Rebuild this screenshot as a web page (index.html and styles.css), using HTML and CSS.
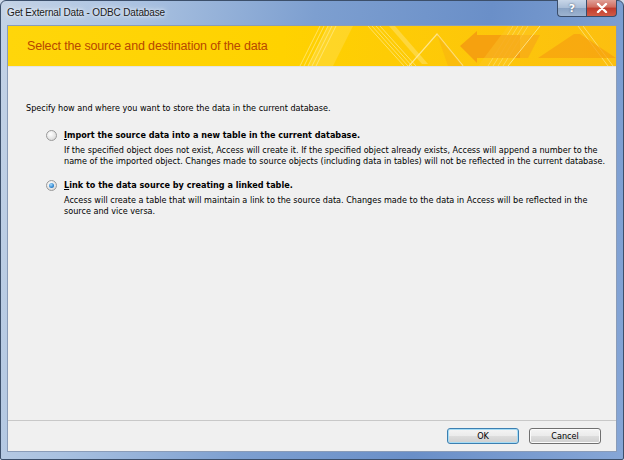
FILE: index.html
```html
<!DOCTYPE html>
<html>
<head>
<meta charset="utf-8">
<link rel="stylesheet" href="styles.css">
</head>
<body>
<div class="window">
  <div class="titlebar">
    <span class="title">Get External Data - ODBC Database</span>
    <div class="captions">
      <span class="cap help">?</span>
      <span class="cap close">
        <svg width="12" height="10" viewBox="0 0 12 10"><path d="M2 1 L10 9 M10 1 L2 9" stroke="#fff" stroke-width="2.4" stroke-linecap="round"/></svg>
      </span>
    </div>
  </div>
  <div class="client">
    <div class="banner">
      <svg class="banner-art" width="608" height="40" viewBox="0 0 608 40">
        <defs>
          <linearGradient id="bg" x1="0" x2="1" y1="0" y2="0">
            <stop offset="0" stop-color="#ffd60a"/>
            <stop offset="0.45" stop-color="#ffd200"/>
            <stop offset="1" stop-color="#fcbf10"/>
          </linearGradient>
        </defs>
        <rect width="608" height="40" fill="url(#bg)"/>
        <polygon points="300,40 320,0 345,0 325,40" fill="#ffe36a" opacity="0.35"/>
        <g stroke="#fff3b0" stroke-width="0.8" opacity="0.7">
          <line x1="292" y1="40" x2="312" y2="0"/>
          <line x1="296" y1="40" x2="316" y2="0"/>
          <line x1="300" y1="40" x2="320" y2="0"/>
          <line x1="304" y1="40" x2="324" y2="0"/>
          <line x1="308" y1="40" x2="328" y2="0"/>
          <line x1="360" y1="0" x2="396" y2="40"/>
          <line x1="364" y1="0" x2="400" y2="40"/>
          <line x1="368" y1="0" x2="404" y2="40"/>
          <line x1="372" y1="0" x2="408" y2="40"/>
          <line x1="480" y1="40" x2="505" y2="0"/>
          <line x1="485" y1="40" x2="510" y2="0"/>
          <line x1="490" y1="40" x2="515" y2="0"/>
          <line x1="495" y1="40" x2="520" y2="0"/>
          <line x1="570" y1="0" x2="600" y2="40"/>
          <line x1="575" y1="0" x2="605" y2="40"/>
        </g>
        <polygon points="381,0 414,38 420,38 387,0" fill="#ffe680" opacity="0.45"/>
        <polyline points="401,40 429,8 455,40" fill="none" stroke="#ffeaa0" stroke-width="1.2" opacity="0.85"/>
        <polygon points="429,8 455,40 440,40" fill="#f8b010" opacity="0.5"/>
        <polygon points="452,20 469,5 469,9 512,9 512,32 469,32 469,37" fill="#f49a10" opacity="0.85"/>
        <polygon points="512,9 532,9 520,32 512,32" fill="#f6a818" opacity="0.7"/>
        <polygon points="530,32 566,8 572,8 608,32" fill="#f6a010" opacity="0.7"/>
        <polygon points="470,40 500,0 530,0 500,40" fill="#fbc830" opacity="0.35"/>
        <line x1="500" y1="40" x2="532" y2="0" stroke="#fff0a0" stroke-width="1" opacity="0.8"/>
      </svg>
      <h1 class="banner-title">Select the source and destination of the data</h1>
    </div>
    <div class="content">
      <p class="intro">Specify how and where you want to store the data in the current database.</p>
      <div class="option">
        <span class="radio"></span>
        <div class="option-text">
          <div class="option-head"><u>I</u>mport the source data into a new table in the current database.</div>
          <div class="option-desc">If the specified object does not exist, Access will create it. If the specified object already exists, Access will append a number to the name of the imported object. Changes made to source objects (including data in tables) will not be reflected in the current database.</div>
        </div>
      </div>
      <div class="option">
        <span class="radio checked"></span>
        <div class="option-text">
          <div class="option-head"><u>L</u>ink to the data source by creating a linked table.</div>
          <div class="option-desc">Access will create a table that will maintain a link to the source data. Changes made to the data in Access will be reflected in the source and vice versa.</div>
        </div>
      </div>
    </div>
    <div class="footer">
      <button class="btn default">OK</button>
      <button class="btn">Cancel</button>
    </div>
  </div>
</div>
</body>
</html>
```
FILE: styles.css
```css
html, body {
  margin: 0;
  padding: 0;
  background: #cdd9ea;
}
.window {
  width: 624px;
  height: 460px;
  box-sizing: border-box;
  display: flex;
  flex-direction: column;
  border: 1px solid #3c4f6a;
  border-radius: 6px 6px 2px 2px;
  background: linear-gradient(100deg, #c4d3e6 0%, #a9c1e0 20%, #7d9fd0 45%, #6a8fc8 70%, #86a6d6 100%);
}
.titlebar {
  height: 24px;
  display: flex;
  justify-content: space-between;
  align-items: flex-start;
  padding-left: 6px;
}
.title {
  font-family: "Liberation Sans", Arial, sans-serif;
  font-size: 10px;
  letter-spacing: -0.15px;
  color: #1a1a1a;
  margin-top: 6px;
  text-shadow: 0 0 6px #eef4fb, 0 0 3px #eef4fb;
}
.captions {
  display: flex;
  margin-right: 6px;
  margin-top: -1px;
}
.cap {
  height: 17px;
  display: flex;
  align-items: center;
  justify-content: center;
  box-sizing: border-box;
  border: 1px solid #3a4d6b;
  border-top: none;
}
.help {
  width: 29px;
  border-radius: 0 0 0 4px;
  border-right: none;
  background: linear-gradient(#c8d6e8 0%, #a8bcd6 50%, #8aa3c4 51%, #9db3d0 100%);
  color: #fff;
  font-family: "DejaVu Sans", sans-serif;
  font-weight: bold;
  font-size: 11px;
  text-shadow: 0 0 2px #34455e;
}
.close {
  width: 31px;
  border-radius: 0 0 4px 0;
  background: linear-gradient(#e0a098 0%, #d06b5e 45%, #c03a2c 50%, #d05a46 100%);
}
.client {
  flex: 1;
  margin: 0 6px 7px 6px;
  border: 1px solid #8a9cb8;
  background: #f0f0f0;
  display: flex;
  flex-direction: column;
}
.banner {
  position: relative;
  height: 40px;
  display: flex;
  align-items: center;
  padding-left: 19px;
  border-bottom: 1px solid #e4e4e4;
  overflow: hidden;
}
.banner-art {
  position: absolute;
  left: 0;
  top: 0;
}
.banner-title {
  position: relative;
  margin: 0;
  font-family: "Liberation Sans", Arial, sans-serif;
  font-weight: normal;
  font-size: 12.5px;
  letter-spacing: -0.15px;
  color: #b84800;
}
.content {
  flex: 1;
  padding: 36px 0 0 18px;
  font-family: "DejaVu Sans Condensed", "DejaVu Sans", sans-serif;
  font-stretch: condensed;
  font-size: 9px;
  line-height: 11px;
  color: #000;
}
.intro {
  margin: 0 0 16px 0;
}
.option {
  display: flex;
  align-items: flex-start;
  gap: 7px;
  margin-left: 20px;
  margin-bottom: 13px;
}
.radio {
  width: 11px;
  height: 11px;
  flex: none;
  box-sizing: border-box;
  border-radius: 50%;
  border: 1px solid #9a9a9a;
  background: radial-gradient(circle at 40% 35%, #ffffff 0%, #e6e6e6 55%, #cfcfcf 100%);
  position: relative;
}
.radio.checked::after {
  content: "";
  position: absolute;
  left: 2px;
  top: 2px;
  width: 5px;
  height: 5px;
  border-radius: 50%;
  background: radial-gradient(circle at 40% 35%, #a8dcff 0%, #2f86d0 60%, #1a5a9e 100%);
}
.option-text {
  width: 545px;
}
.option-head {
  font-weight: bold;
  margin-bottom: 4px;
}
.option-desc {
  width: 545px;
}
.footer {
  box-sizing: border-box;
  height: 31px;
  border-top: 1px solid #c8c8c8;
  display: flex;
  justify-content: flex-end;
  align-items: flex-start;
  gap: 10px;
  padding: 7px 15px 0 0;
}
.btn {
  width: 72px;
  height: 16px;
  padding: 0;
  font-family: "DejaVu Sans Condensed", "DejaVu Sans", sans-serif;
  font-stretch: condensed;
  font-size: 9px;
  color: #000;
  border: 1px solid #707070;
  border-radius: 3px;
  background: linear-gradient(#f4f4f4 0%, #ebebeb 50%, #dddddd 51%, #cfcfcf 100%);
  box-shadow: inset 0 0 0 1px #fbfbfb;
}
.btn.default {
  border-color: #3c7fb1;
  box-shadow: inset 0 0 0 1px #a6dcf5;
}
```
